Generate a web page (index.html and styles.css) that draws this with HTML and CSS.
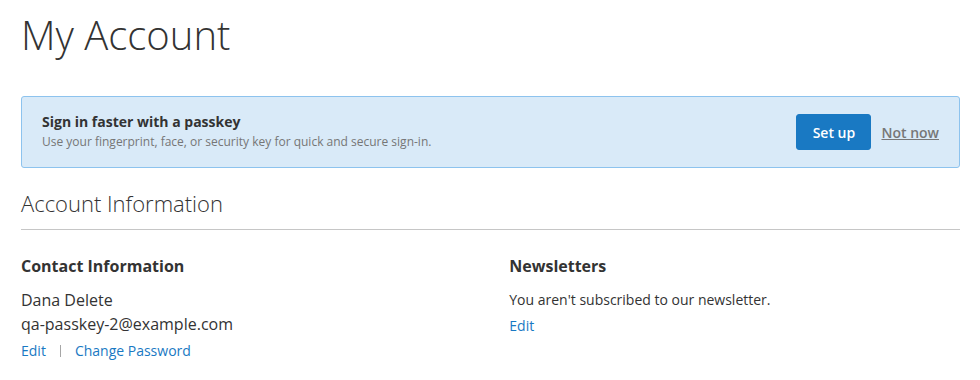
FILE: index.html
```html
<!DOCTYPE html>
<html lang="en">
<head>
<meta charset="utf-8">
<title>My Account</title>
<link rel="stylesheet" href="styles.css">
</head>
<body>
<main class="page">
  <h1 class="page-title">My Account</h1>

  <section class="passkey">
    <div class="passkey-text">
      <strong class="passkey-title">Sign in faster with a passkey</strong>
      <p class="passkey-desc">Use your fingerprint, face, or security key for quick and secure sign-in.</p>
    </div>
    <div class="passkey-actions">
      <button class="btn-primary" type="button">Set up</button>
      <a class="link-muted" href="#">Not now</a>
    </div>
  </section>

  <section class="block">
    <h2 class="block-title">Account Information</h2>
    <div class="boxes">
      <div class="box">
        <h3 class="box-title">Contact Information</h3>
        <p class="box-text">Dana Delete<br>qa-passkey-2@example.com</p>
        <div class="box-actions">
          <a href="#" class="action">Edit</a>
          <span class="sep"></span>
          <a href="#" class="action">Change Password</a>
        </div>
      </div>
      <div class="box">
        <h3 class="box-title">Newsletters</h3>
        <p class="box-text small">You aren't subscribed to our newsletter.</p>
        <div class="box-actions">
          <a href="#" class="action">Edit</a>
        </div>
      </div>
    </div>
  </section>
</main>
</body>
</html>
```
FILE: styles.css
```css
* { box-sizing: border-box; }
html, body { margin: 0; padding: 0; background: #fff; }
body {
  font-family: "Open Sans", "Liberation Sans", sans-serif;
  font-size: 14px;
  color: #333;
}
.page { padding: 0 20px 0 21px; }
.page-title {
  margin: 0;
  padding-top: 9px;
  font-size: 40px;
  font-weight: 300;
  line-height: 52px;
  color: #333;
}
.passkey {
  margin-top: 35px;
  display: flex;
  align-items: center;
  justify-content: space-between;
  height: 72px;
  padding: 0 20px;
  background: #d9eaf8;
  border: 1px solid #8dc3ee;
  border-radius: 3px;
}
.passkey-text { align-self: flex-start; padding-top: 15px; }
.passkey-title {
  display: block;
  font-size: 14px;
  font-weight: 700;
  line-height: 20px;
}
.passkey-desc {
  margin: 1px 0 0;
  font-size: 12px;
  line-height: 18px;
  color: #767676;
}
.passkey-actions { display: flex; align-items: center; gap: 10px; }
.btn-primary {
  font-family: inherit;
  font-size: 14px;
  font-weight: 600;
  color: #fff;
  background: #1979c3;
  border: 1px solid #1979c3;
  border-radius: 3px;
  width: 75px;
  height: 36px;
  padding: 0;
  cursor: pointer;
}
.link-muted {
  font-size: 14px;
  font-weight: 600;
  color: #777;
  text-decoration: underline;
}
.block { margin-top: 21px; }
.block-title {
  margin: 0;
  font-size: 22px;
  font-weight: 300;
  line-height: 28px;
  padding-bottom: 12px;
  border-bottom: 1px solid #c6c6c6;
}
.boxes { display: flex; justify-content: space-between; padding-top: 25px; }
.box { width: 48%; }
.box-title {
  margin: 0;
  font-size: 16px;
  font-weight: 700;
  line-height: 22px;
}
.box-text {
  margin: 11px 0 0;
  font-size: 16px;
  line-height: 24px;
}
.box-text.small { font-size: 14px; line-height: 22px; margin-top: 12px; }
.box-actions { display: flex; align-items: center; margin-top: 5px; line-height: 20px; }
.action { color: #1979c3; text-decoration: none; font-size: 14px; }
.sep {
  width: 1px;
  height: 12px;
  background: #a6a6a6;
  margin: 0 14px 0 14px;
}
```
